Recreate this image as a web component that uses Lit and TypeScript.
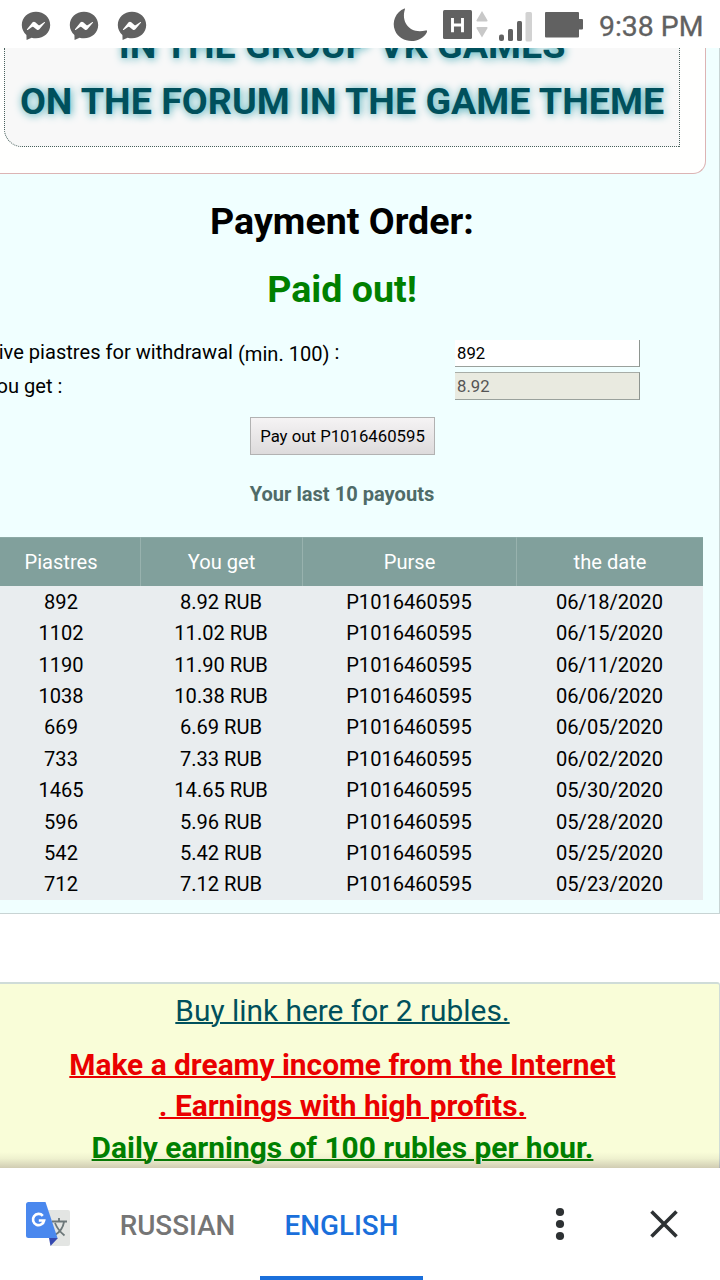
import { LitElement, html, css } from "lit";
import { customElement } from "lit/decorators.js";

const WALLET = "P1016460595";
const PAYOUTS: [string, string, string][] = [
  ["892", "8.92", "06/18/2020"],
  ["1102", "11.02", "06/15/2020"],
  ["1190", "11.90", "06/11/2020"],
  ["1038", "10.38", "06/06/2020"],
  ["669", "6.69", "06/05/2020"],
  ["733", "7.33", "06/02/2020"],
  ["1465", "14.65", "05/30/2020"],
  ["596", "5.96", "05/28/2020"],
  ["542", "5.42", "05/25/2020"],
  ["712", "7.12", "05/23/2020"],
];

@customElement("status-bar")
export class StatusBar extends LitElement {
  static styles = css`
    :host { display: flex; height: 48px; background: #fff; align-items: center; flex: none; font-family: Roboto, sans-serif; }
    .chats { display: flex; gap: 18px; padding-left: 21px; }
    .chat { width: 30px; height: 30px; display: block; margin-top: 3px; }
    .right { display: block; margin-left: auto; width: 200px; height: 48px; }
    .time { width: 130px; font-size: 28.4px; padding: 5px 0 0 9px; box-sizing: border-box; height: 48px; line-height: 43px; color: #616161; white-space: nowrap; -webkit-text-stroke: 0.3px #616161; }
  `;
  chat() {
    return html`<svg class="chat" viewBox="0 0 30 30">
      <path fill="#616161" d="M15 .8C7 .8.8 6.600.8 14c0 4 1.800 7.500 4.600 9.900L5.600 29l5-2.200c1.400.4 2.900.5 4.400.5 8 0 14.200-5.700 14.200-13.300S23 .8 15 .8z"/>
      <path fill="#fff" d="M6 18.200l5.600-6.900q1.300-1 2.700 0l3.100 2.700q.8.500 1.500 0l4.500-3q1-.4.500.7l-5.500 6.600q-1.300 1.200-2.800.1L12.400 16q-.7-.5-1.400 0l-4.300 3q-1.100.3-.7-.8z"/>
    </svg>`;
  }
  render() {
    return html`
      <div class="chats">${this.chat()}${this.chat()}${this.chat()}</div>
      <svg class="right" viewBox="390 0 200 48" fill="#616161">
        <path d="M404.500 8.500C395.500 12 391.500 22 395 30.500c5 13 25.500 14.500 32 1.500q.4-2-1.300-1.600C410.500 34.500 400.500 22.500 405 9q.2-.7-.5-.5z"/>
        <rect x="443" y="10" width="29" height="29" rx="1.500"/>
        <path d="M452.500 18v14.300M462.500 18v14.300M452.500 25h10" stroke="#fff" stroke-width="2.900"/>
        <path fill="#c8c8c8" d="M482 11l5.600 9.500q0 1-1 1h-9.200q-1 0-1-1zM482 37.500l-5.600-9.500q0-1 1-1h9.200q1 0 1 1z"/>
        <rect x="499" y="34.500" width="5" height="6.500" rx="2"/>
        <rect x="508" y="29" width="5" height="12" rx="1.500"/>
        <rect x="517" y="21" width="5" height="20" rx="1.500"/>
        <rect x="525.500" y="12" width="6.500" height="29.500" rx="1.500" fill="#d2d2d2"/>
        <path d="M546 12h32q1 0 1 1v6h3q1 0 1 1v8.500q0 1-1 1h-3v7q0 1-1 1h-32q-1 0-1-1v-23.500q0-1 1-1z"/>
      </svg>
      <div class="time">9:38 PM</div>`;
  }
}

@customElement("translate-bar")
export class TranslateBar extends LitElement {
  static styles = css`
    :host { display: flex; height: 112px; background: #fff; flex: none; font: 500 27.8px/112px Roboto, sans-serif; }
    .logo { width: 48px; height: 48px; margin: 32px 0 0 24px; display: block; }
    .tab { box-sizing: border-box; height: 112px; padding-top: 2px; text-align: center; white-space: nowrap; }
    .ru { width: 163px; margin-left: 24px; color: #757575; }
    .en { width: 163px; margin-left: 1px; color: #1a6fdb; border-bottom: 4px solid #1a6fdb; }
    .dots { display: block; width: 24px; height: 40px; margin: 36px 0 0 125px; }
    .close { display: block; width: 32px; height: 32px; margin: 40px 0 0 76px; }
  `;
  render() {
    return html`
      <svg class="logo" viewBox="0 0 48 48">
        <path fill="#e3e5e3" d="M22 10h22q2 0 2 2v32q0 2-2 2H27z"/>
        <path fill="none" stroke="#6c7779" stroke-width="1.800" d="M28 21.500h15M35 18v3.500M40 22c-1 6-4 10-9 13M31 23c2 5 5 9 9.500 12.500"/>
        <path fill="#3549b0" d="M25 38l9 0-7.500 8z"/>
        <path fill="#4a88ee" d="M4.500 2H21.500L33.500 38H4.500q-2.500 0-2.500-2.500V4.500Q2 2 4.500 2z"/>
        <path fill="none" stroke="#fff" stroke-width="2.700" d="M18.800 15.800a5.600 5.600 0 1 0 1.300 4.700H14.800"/>
      </svg>
      <div class="tab ru">RUSSIAN</div>
      <div class="tab en">ENGLISH</div>
      <svg class="dots" viewBox="0 0 24 40" fill="#2d3133"><circle cx="12" cy="8" r="4.100"/><circle cx="12" cy="20" r="4.100"/><circle cx="12" cy="32" r="4.100"/></svg>
      <svg class="close" viewBox="0 0 32 32"><path d="M3.500 3.500l25 25M28.500 3.500l-25 25" stroke="#2d3133" stroke-width="3.600"/></svg>`;
  }
}

@customElement("app-root")
export class AppRoot extends LitElement {
  static styles = css`
    :host { display: flex; flex-direction: column; width: 720px; height: 1280px; overflow: hidden; background: #fff; font-family: Roboto, sans-serif; color: #000; }
    .view { flex: 1; min-height: 0; overflow: hidden; display: flex; flex-direction: column; position: relative; }
    .panel { box-sizing: border-box; flex: none; width: 756px; height: 866px; margin-left: -36px; background: #f0ffff; border: 1px solid #c8d4d4; border-top: 0; display: flex; flex-direction: column; align-items: center; white-space: nowrap; }
    .promo { box-sizing: border-box; width: 728px; height: 126px; flex: none; background: #fffffe; border: 1px solid #dcb4b4; border-top: 0; border-radius: 0 0 13px 13px; display: flex; justify-content: center; }
    .inner { box-sizing: border-box; width: 676px; height: 99px; overflow: hidden; background: #f8f8f8; border: 1px dotted #47605c; border-top: 0; border-radius: 0 0 0 18px; text-align: center; display: flex; flex-direction: column; justify-content: flex-end; padding-bottom: 17px; font: 700 37.650px/56px Roboto, sans-serif; color: #00505c; text-shadow: 1px 1px 9px #40a8b4; }
    .line { flex: none; }
    .title { font: 700 37.600px/68px Roboto, sans-serif; margin-top: 13px; }
    .paid { color: #008000; }
    .title.paid { margin-top: 0; }
    .form { width: 720px; flex: none; margin-top: 17px; height: 66px; display: grid; grid-template-columns: 473px 185px; grid-template-rows: 33px 33px; font-size: 20.100px; }
    .label { line-height: 25px; margin-left: 3px; }
    .get { padding-top: 1px; }
    .min { position: relative; top: 2px; }
    .field { box-sizing: border-box; height: 27px; margin-bottom: 6px; background: #fff; border-right: 1px solid #8e9590; border-bottom: 1px solid #9aa19c; font: 16.700px/27px Roboto, sans-serif; padding-left: 2px; }
    .off { height: 28px; margin-top: -1px; background: #e9eae0; border-top: 1px solid #a8ada7; color: #555; }
    .btn { box-sizing: border-box; width: 185px; height: 38px; margin: 11px 0 0 1px; border: 1px solid #b2b2b2; background: linear-gradient(#f5f3f4, #dddbdc); font: 16.750px/36px Roboto, sans-serif; text-align: center; padding: 0; color: #000; }
    .sub { font: 700 20.100px/30px Roboto, sans-serif; color: #4f6b68; margin-top: 24px; }
    .table { width: 721px; flex: none; margin: 28px 0 0 1px; }
    .row { display: grid; grid-template-columns: 158px 162px 214px 187px; height: 31.360px; line-height: 32px; text-align: center; font-size: 20.100px; background: #e9edef; }
    .head { height: 49px; line-height: 51px; background: #81a09c; color: #fff; box-shadow: inset 0 1px #8daaa6; }
    .head .cell { box-sizing: border-box; height: 49px; }
    .head .cell + .cell { border-left: 1px solid #98b2ae; }
    .ads { box-sizing: border-box; flex: none; width: 756px; height: 220px; margin: 68px 0 0 -36px; background: #f9fdd8; border: 2px solid #cfdcd8; border-right-width: 1px; border-radius: 3px; text-align: center; font: 700 29.870px/41.500px Roboto, sans-serif; padding-top: 6px; white-space: nowrap; }
    .link { text-decoration: underline; text-decoration-thickness: 2px; }
    .buy { font-weight: 400; color: #00505c; margin-bottom: 12px; }
    .red { color: #ea0000; }
    .shade { position: absolute; left: 0; right: 0; bottom: 0; height: 16px; background: linear-gradient(rgba(80,60,60,0), rgba(80,60,60,.06) 40%, rgba(80,50,60,.24)); }
  `;
  render() {
    return html`
      <status-bar></status-bar>
      <div class="view">
        <div class="panel">
          <div class="promo"><div class="inner"><div class="line">IN THE GROUP VK GAMES</div><div class="line">ON THE FORUM IN THE GAME THEME</div></div></div>
          <div class="title">Payment Order:</div>
          <div class="title paid">Paid out!</div>
          <div class="form">
            <div class="label">Give piastres for withdrawal <span class="min">(min. 100)</span> :</div><div class="field">892</div>
            <div class="label get">You get :</div><div class="field off">8.92</div>
          </div>
          <button class="btn">Pay out ${WALLET}</button>
          <div class="sub">Your last 10 payouts</div>
          <div class="table">
            <div class="row head">${["Piastres", "You get", "Purse", "the date"].map((t) => html`<div class="cell">${t}</div>`)}</div>
            ${PAYOUTS.map(([p, r, d]) => html`<div class="row"><div>${p}</div><div>${r} RUB</div><div>${WALLET}</div><div>${d}</div></div>`)}
          </div>
        </div>
        <div class="ads">
          <div class="link buy">Buy link here for 2 rubles.</div>
          <div class="link red">Make a dreamy income from the Internet</div>
          <div class="link red">. Earnings with high profits.</div>
          <div class="link paid">Daily earnings of 100 rubles per hour.</div>
        </div>
        <div class="shade"></div>
      </div>
      <translate-bar></translate-bar>`;
  }
}
